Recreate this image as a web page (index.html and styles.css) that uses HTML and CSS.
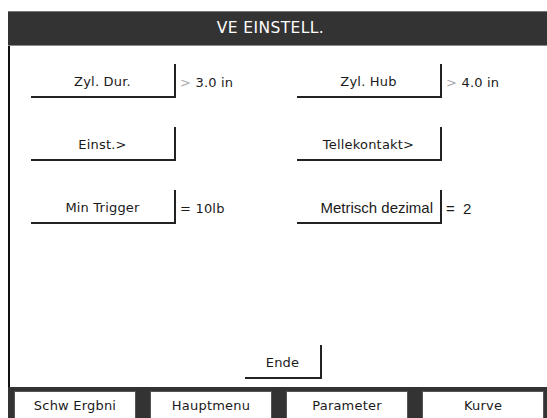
FILE: index.html
```html
<!DOCTYPE html>
<html>
<head>
    <title>VE Einstell.</title>
    <link rel="stylesheet" href="styles.css">
</head>
<body>
    <div class="screen">
        <div class="title-bar">VE EINSTELL.</div>

        <div class="content">
            <div class="settings">
                <div class="setting">
                    <div class="btn">Zyl. Dur.</div>
                    <span class="value"><span class="dim">&gt;</span> 3.0 in</span>
                </div>
                <div class="setting">
                    <div class="btn">Zyl. Hub</div>
                    <span class="value"><span class="dim">&gt;</span> 4.0 in</span>
                </div>
                <div class="setting">
                    <div class="btn">Einst.&gt;</div>
                </div>
                <div class="setting">
                    <div class="btn">Tellekontakt&gt;</div>
                </div>
                <div class="setting">
                    <div class="btn">Min Trigger</div>
                    <span class="value">= 10lb</span>
                </div>
                <div class="setting">
                    <div class="btn btn-alt">Metrisch dezimal</div>
                    <span class="value value-alt">=&nbsp; 2</span>
                </div>
            </div>

            <div class="footer-row">
                <div class="btn btn-end">Ende</div>
            </div>
        </div>

        <div class="tabs">
            <div class="tab">Schw Ergbni</div>
            <div class="tab">Hauptmenu</div>
            <div class="tab">Parameter</div>
            <div class="tab">Kurve</div>
        </div>
    </div>
</body>
</html>
```

FILE: styles.css
```css
body {
    margin: 0;
    background: #fff;
    font-family: "DejaVu Sans", Verdana, sans-serif;
    font-size: 13px;
    letter-spacing: 0.2px;
    color: #1a1a1a;
    overflow: hidden;
}

.screen {
    margin: 11px 0 0 8px;
    width: 545px;
    height: 407px;
    display: flex;
    flex-direction: column;
}

.title-bar {
    height: 33px;
    line-height: 33px;
    background: #333;
    border-top: 1px solid #777;
    border-bottom: 1px solid #8a8a8a;
    color: #fff;
    font-size: 15.5px;
    letter-spacing: 0.4px;
    text-align: center;
    padding-right: 20px;
}

.content {
    flex: 1;
    background: #fff;
    border-left: 2px solid #111;
    display: flex;
    flex-direction: column;
    padding: 18px 0 8px 21px;
}

.settings {
    display: grid;
    grid-template-columns: 266px 1fr;
    row-gap: 29px;
}

.setting {
    display: flex;
    align-items: center;
}

.btn {
    width: 143px;
    height: 32px;
    line-height: 36px;
    text-align: center;
    border-right: 2px solid #222;
    border-bottom: 2px solid #222;
}

.btn-alt {
    font-family: "Liberation Sans", Arial, sans-serif;
    font-size: 15px;
    letter-spacing: 0;
    text-align: right;
    padding-right: 7px;
    width: 136px;
}

.value {
    margin-left: 4px;
    padding-top: 2px;
}

.dim {
    color: #aaa;
}

.value-alt {
    font-family: "Liberation Sans", Arial, sans-serif;
    font-size: 15px;
    letter-spacing: 0;
}

.footer-row {
    margin-top: auto;
    padding-left: 214px;
}

.btn-end {
    width: 75px;
}

.tabs {
    height: 31px;
    background: #333;
    display: grid;
    grid-template-columns: repeat(4, 122px);
    column-gap: 14px;
    padding: 4px 0 0 6px;
    box-sizing: border-box;
}

.tab {
    background: #fff;
    border: 1px solid #555;
    border-bottom: none;
    text-align: center;
    line-height: 28px;
}
```
